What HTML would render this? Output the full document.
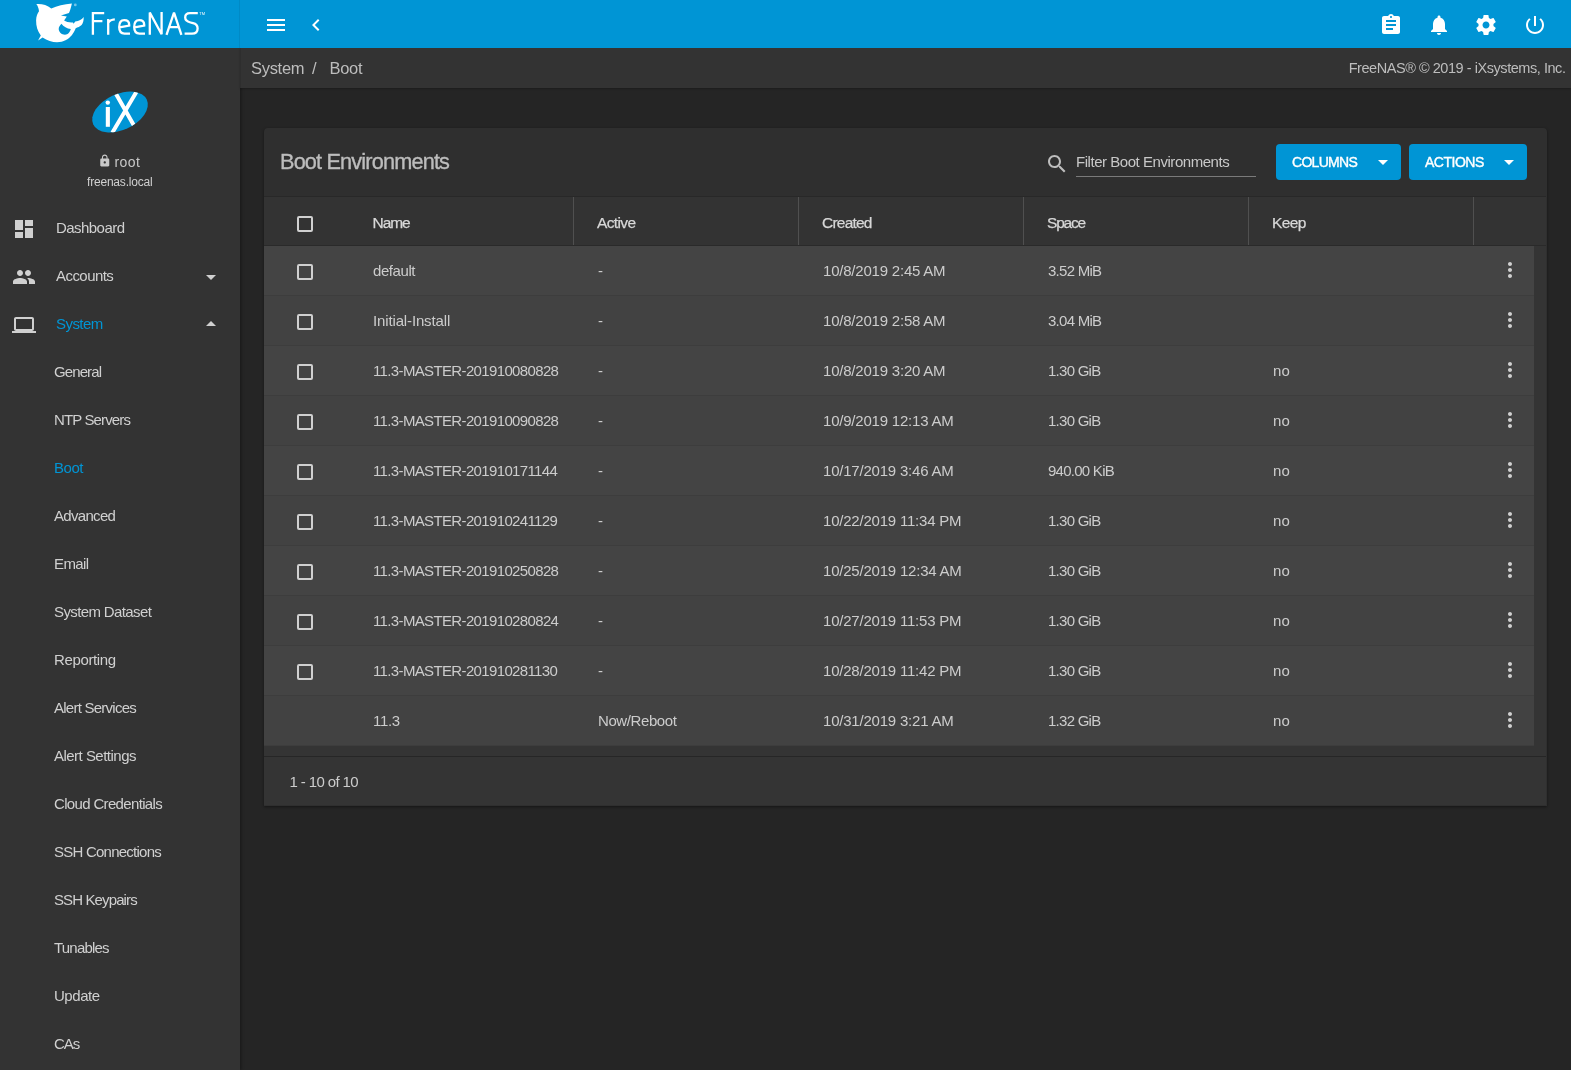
<!DOCTYPE html>
<html><head><meta charset="utf-8"><title>FreeNAS - Boot</title>
<style>
*{box-sizing:border-box;margin:0;padding:0}
html,body{width:1571px;height:1070px;overflow:hidden;background:#252525;font-family:"Liberation Sans",sans-serif;}
body{will-change:transform}
.t{position:absolute;white-space:nowrap}
svg.ic{position:absolute;width:24px;height:24px}
#top{position:absolute;left:0;top:0;width:1571px;height:48px;background:#0095d5}
#logodiv{position:absolute;left:239px;top:0;width:1px;height:48px;background:rgba(0,0,0,0.07)}
#side{position:absolute;left:0;top:48px;width:240px;height:1022px;background:#333333;box-shadow:1px 0 3px rgba(0,0,0,0.38)}
#crumbbar{position:absolute;left:240px;top:48px;width:1331px;height:40px;background:#333333;border-left:1px solid #2e2e2e;box-shadow:0 1px 2px rgba(0,0,0,0.25)}
#card{position:absolute;left:264px;top:128px;width:1283px;height:678px;background:#2f2f2f;border-radius:4px 4px 0 0;box-shadow:0 1px 3px rgba(0,0,0,0.45);overflow:hidden}
#tbl{position:absolute;left:0;top:68px;width:1282px;height:609px;background:#343434}
#uline{position:absolute;left:1076px;top:176px;width:180px;height:1px;background:#7a7a7a}
.btn{position:absolute;top:144px;height:36px;background:#0095d5;border-radius:4px}
#hdr{position:absolute;left:264px;top:196px;width:1282px;height:50px;background:#333333;border-top:1px solid #282828;border-bottom:1px solid #2a2a2a}
.vdiv{position:absolute;top:197px;width:1px;height:48px;background:#505050}
.cb{position:absolute;width:16px;height:16px;border:2px solid #d0d0d0;border-radius:2px}
.row{position:absolute;left:264px;width:1270px;height:50px;border-bottom:1px solid #3d3d3d}
.odd{background:#444444}
.even{background:#424242}
#fline{position:absolute;left:264px;top:756px;width:1282px;height:1px;background:#262626}

</style></head>
<body>
<div id="card"><div id="tbl"></div></div><div class="t" style="left:280px;top:151.13px;font-size:21.7px;line-height:21.7px;color:#bdbdbd;letter-spacing:-0.83px;-webkit-text-stroke:0.35px #bdbdbd;">Boot Environments</div><svg class="ic" style="left:1045px;top:152px;width:24px;height:24px" viewBox="0 0 24 24" fill="#bdbdbd"><path d="M15.5 14h-.79l-.28-.27C15.41 12.59 16 11.11 16 9.5 16 5.91 13.09 3 9.5 3S3 5.91 3 9.5 5.91 16 9.5 16c1.61 0 3.09-.59 4.23-1.57l.27.28v.79l5 4.99L20.49 19l-4.99-5zm-6 0C7.01 14 5 11.99 5 9.5S7.01 5 9.5 5 14 7.01 14 9.5 11.99 14 9.5 14z"/></svg><div class="t" style="left:1076px;top:154.30px;font-size:15px;line-height:15px;color:#c8c8c8;letter-spacing:-0.46px;">Filter Boot Environments</div><div id="uline"></div><div class="btn" style="left:1276px;width:125px"></div><div class="t" style="left:1292px;top:155.05px;font-size:14px;line-height:14px;color:#fff;letter-spacing:-0.7px;-webkit-text-stroke:0.4px #fff;">COLUMNS</div><svg class="ic" style="left:1371px;top:150px;width:24px;height:24px" viewBox="0 0 24 24" fill="#fff"><path d="M7 10l5 5 5-5z"/></svg><div class="btn" style="left:1409px;width:118px"></div><div class="t" style="left:1425px;top:155.05px;font-size:14px;line-height:14px;color:#fff;letter-spacing:-0.5px;-webkit-text-stroke:0.4px #fff;">ACTIONS</div><svg class="ic" style="left:1497px;top:150px;width:24px;height:24px" viewBox="0 0 24 24" fill="#fff"><path d="M7 10l5 5 5-5z"/></svg><div id="hdr"></div><div class="cb" style="left:297px;top:216px"></div><div class="t" style="left:372.5px;top:215.08px;font-size:15.5px;line-height:15.5px;color:#d8d8d8;letter-spacing:-1.05px;-webkit-text-stroke:0.25px #d8d8d8;">Name</div><div class="t" style="left:597px;top:215.08px;font-size:15.5px;line-height:15.5px;color:#d8d8d8;letter-spacing:-0.63px;-webkit-text-stroke:0.25px #d8d8d8;">Active</div><div class="t" style="left:822px;top:215.08px;font-size:15.5px;line-height:15.5px;color:#d8d8d8;letter-spacing:-0.78px;-webkit-text-stroke:0.25px #d8d8d8;">Created</div><div class="t" style="left:1047px;top:215.08px;font-size:15.5px;line-height:15.5px;color:#d8d8d8;letter-spacing:-1.2px;-webkit-text-stroke:0.25px #d8d8d8;">Space</div><div class="t" style="left:1272px;top:215.08px;font-size:15.5px;line-height:15.5px;color:#d8d8d8;letter-spacing:-0.58px;-webkit-text-stroke:0.25px #d8d8d8;">Keep</div><div class="vdiv" style="left:573px"></div><div class="vdiv" style="left:798px"></div><div class="vdiv" style="left:1023px"></div><div class="vdiv" style="left:1248px"></div><div class="vdiv" style="left:1473px"></div><div class="row odd" style="top:246px"></div><div class="cb" style="left:297px;top:264px"></div><div class="t" style="left:373px;top:263.30px;font-size:15px;line-height:15px;color:#cccccc;letter-spacing:-0.42px;">default</div><div class="t" style="left:598px;top:263.30px;font-size:15px;line-height:15px;color:#cccccc;letter-spacing:-0.41px;">-</div><div class="t" style="left:823px;top:263.30px;font-size:15px;line-height:15px;color:#cccccc;letter-spacing:-0.21px;">10/8/2019 2:45 AM</div><div class="t" style="left:1048px;top:263.30px;font-size:15px;line-height:15px;color:#cccccc;letter-spacing:-0.74px;">3.52 MiB</div><svg class="ic" style="left:1498px;top:258px;width:24px;height:24px" viewBox="0 0 24 24" fill="#d0d0d0"><path d="M12 8c1.1 0 2-.9 2-2s-.9-2-2-2-2 .9-2 2 .9 2 2 2zm0 2c-1.1 0-2 .9-2 2s.9 2 2 2 2-.9 2-2-.9-2-2-2zm0 6c-1.1 0-2 .9-2 2s.9 2 2 2 2-.9 2-2-.9-2-2-2z"/></svg><div class="row even" style="top:296px"></div><div class="cb" style="left:297px;top:314px"></div><div class="t" style="left:373px;top:313.30px;font-size:15px;line-height:15px;color:#cccccc;letter-spacing:-0.14px;">Initial-Install</div><div class="t" style="left:598px;top:313.30px;font-size:15px;line-height:15px;color:#cccccc;letter-spacing:-0.41px;">-</div><div class="t" style="left:823px;top:313.30px;font-size:15px;line-height:15px;color:#cccccc;letter-spacing:-0.21px;">10/8/2019 2:58 AM</div><div class="t" style="left:1048px;top:313.30px;font-size:15px;line-height:15px;color:#cccccc;letter-spacing:-0.74px;">3.04 MiB</div><svg class="ic" style="left:1498px;top:308px;width:24px;height:24px" viewBox="0 0 24 24" fill="#d0d0d0"><path d="M12 8c1.1 0 2-.9 2-2s-.9-2-2-2-2 .9-2 2 .9 2 2 2zm0 2c-1.1 0-2 .9-2 2s.9 2 2 2 2-.9 2-2-.9-2-2-2zm0 6c-1.1 0-2 .9-2 2s.9 2 2 2 2-.9 2-2-.9-2-2-2z"/></svg><div class="row odd" style="top:346px"></div><div class="cb" style="left:297px;top:364px"></div><div class="t" style="left:373px;top:363.30px;font-size:15px;line-height:15px;color:#cccccc;letter-spacing:-0.64px;">11.3-MASTER-201910080828</div><div class="t" style="left:598px;top:363.30px;font-size:15px;line-height:15px;color:#cccccc;letter-spacing:-0.41px;">-</div><div class="t" style="left:823px;top:363.30px;font-size:15px;line-height:15px;color:#cccccc;letter-spacing:-0.21px;">10/8/2019 3:20 AM</div><div class="t" style="left:1048px;top:363.30px;font-size:15px;line-height:15px;color:#cccccc;letter-spacing:-0.74px;">1.30 GiB</div><div class="t" style="left:1273px;top:363.30px;font-size:15px;line-height:15px;color:#cccccc;letter-spacing:0.1px;">no</div><svg class="ic" style="left:1498px;top:358px;width:24px;height:24px" viewBox="0 0 24 24" fill="#d0d0d0"><path d="M12 8c1.1 0 2-.9 2-2s-.9-2-2-2-2 .9-2 2 .9 2 2 2zm0 2c-1.1 0-2 .9-2 2s.9 2 2 2 2-.9 2-2-.9-2-2-2zm0 6c-1.1 0-2 .9-2 2s.9 2 2 2 2-.9 2-2-.9-2-2-2z"/></svg><div class="row even" style="top:396px"></div><div class="cb" style="left:297px;top:414px"></div><div class="t" style="left:373px;top:413.30px;font-size:15px;line-height:15px;color:#cccccc;letter-spacing:-0.64px;">11.3-MASTER-201910090828</div><div class="t" style="left:598px;top:413.30px;font-size:15px;line-height:15px;color:#cccccc;letter-spacing:-0.41px;">-</div><div class="t" style="left:823px;top:413.30px;font-size:15px;line-height:15px;color:#cccccc;letter-spacing:-0.21px;">10/9/2019 12:13 AM</div><div class="t" style="left:1048px;top:413.30px;font-size:15px;line-height:15px;color:#cccccc;letter-spacing:-0.74px;">1.30 GiB</div><div class="t" style="left:1273px;top:413.30px;font-size:15px;line-height:15px;color:#cccccc;letter-spacing:0.1px;">no</div><svg class="ic" style="left:1498px;top:408px;width:24px;height:24px" viewBox="0 0 24 24" fill="#d0d0d0"><path d="M12 8c1.1 0 2-.9 2-2s-.9-2-2-2-2 .9-2 2 .9 2 2 2zm0 2c-1.1 0-2 .9-2 2s.9 2 2 2 2-.9 2-2-.9-2-2-2zm0 6c-1.1 0-2 .9-2 2s.9 2 2 2 2-.9 2-2-.9-2-2-2z"/></svg><div class="row odd" style="top:446px"></div><div class="cb" style="left:297px;top:464px"></div><div class="t" style="left:373px;top:463.30px;font-size:15px;line-height:15px;color:#cccccc;letter-spacing:-0.64px;">11.3-MASTER-201910171144</div><div class="t" style="left:598px;top:463.30px;font-size:15px;line-height:15px;color:#cccccc;letter-spacing:-0.41px;">-</div><div class="t" style="left:823px;top:463.30px;font-size:15px;line-height:15px;color:#cccccc;letter-spacing:-0.21px;">10/17/2019 3:46 AM</div><div class="t" style="left:1048px;top:463.30px;font-size:15px;line-height:15px;color:#cccccc;letter-spacing:-0.74px;">940.00 KiB</div><div class="t" style="left:1273px;top:463.30px;font-size:15px;line-height:15px;color:#cccccc;letter-spacing:0.1px;">no</div><svg class="ic" style="left:1498px;top:458px;width:24px;height:24px" viewBox="0 0 24 24" fill="#d0d0d0"><path d="M12 8c1.1 0 2-.9 2-2s-.9-2-2-2-2 .9-2 2 .9 2 2 2zm0 2c-1.1 0-2 .9-2 2s.9 2 2 2 2-.9 2-2-.9-2-2-2zm0 6c-1.1 0-2 .9-2 2s.9 2 2 2 2-.9 2-2-.9-2-2-2z"/></svg><div class="row even" style="top:496px"></div><div class="cb" style="left:297px;top:514px"></div><div class="t" style="left:373px;top:513.30px;font-size:15px;line-height:15px;color:#cccccc;letter-spacing:-0.64px;">11.3-MASTER-201910241129</div><div class="t" style="left:598px;top:513.30px;font-size:15px;line-height:15px;color:#cccccc;letter-spacing:-0.41px;">-</div><div class="t" style="left:823px;top:513.30px;font-size:15px;line-height:15px;color:#cccccc;letter-spacing:-0.21px;">10/22/2019 11:34 PM</div><div class="t" style="left:1048px;top:513.30px;font-size:15px;line-height:15px;color:#cccccc;letter-spacing:-0.74px;">1.30 GiB</div><div class="t" style="left:1273px;top:513.30px;font-size:15px;line-height:15px;color:#cccccc;letter-spacing:0.1px;">no</div><svg class="ic" style="left:1498px;top:508px;width:24px;height:24px" viewBox="0 0 24 24" fill="#d0d0d0"><path d="M12 8c1.1 0 2-.9 2-2s-.9-2-2-2-2 .9-2 2 .9 2 2 2zm0 2c-1.1 0-2 .9-2 2s.9 2 2 2 2-.9 2-2-.9-2-2-2zm0 6c-1.1 0-2 .9-2 2s.9 2 2 2 2-.9 2-2-.9-2-2-2z"/></svg><div class="row odd" style="top:546px"></div><div class="cb" style="left:297px;top:564px"></div><div class="t" style="left:373px;top:563.30px;font-size:15px;line-height:15px;color:#cccccc;letter-spacing:-0.64px;">11.3-MASTER-201910250828</div><div class="t" style="left:598px;top:563.30px;font-size:15px;line-height:15px;color:#cccccc;letter-spacing:-0.41px;">-</div><div class="t" style="left:823px;top:563.30px;font-size:15px;line-height:15px;color:#cccccc;letter-spacing:-0.21px;">10/25/2019 12:34 AM</div><div class="t" style="left:1048px;top:563.30px;font-size:15px;line-height:15px;color:#cccccc;letter-spacing:-0.74px;">1.30 GiB</div><div class="t" style="left:1273px;top:563.30px;font-size:15px;line-height:15px;color:#cccccc;letter-spacing:0.1px;">no</div><svg class="ic" style="left:1498px;top:558px;width:24px;height:24px" viewBox="0 0 24 24" fill="#d0d0d0"><path d="M12 8c1.1 0 2-.9 2-2s-.9-2-2-2-2 .9-2 2 .9 2 2 2zm0 2c-1.1 0-2 .9-2 2s.9 2 2 2 2-.9 2-2-.9-2-2-2zm0 6c-1.1 0-2 .9-2 2s.9 2 2 2 2-.9 2-2-.9-2-2-2z"/></svg><div class="row even" style="top:596px"></div><div class="cb" style="left:297px;top:614px"></div><div class="t" style="left:373px;top:613.30px;font-size:15px;line-height:15px;color:#cccccc;letter-spacing:-0.64px;">11.3-MASTER-201910280824</div><div class="t" style="left:598px;top:613.30px;font-size:15px;line-height:15px;color:#cccccc;letter-spacing:-0.41px;">-</div><div class="t" style="left:823px;top:613.30px;font-size:15px;line-height:15px;color:#cccccc;letter-spacing:-0.21px;">10/27/2019 11:53 PM</div><div class="t" style="left:1048px;top:613.30px;font-size:15px;line-height:15px;color:#cccccc;letter-spacing:-0.74px;">1.30 GiB</div><div class="t" style="left:1273px;top:613.30px;font-size:15px;line-height:15px;color:#cccccc;letter-spacing:0.1px;">no</div><svg class="ic" style="left:1498px;top:608px;width:24px;height:24px" viewBox="0 0 24 24" fill="#d0d0d0"><path d="M12 8c1.1 0 2-.9 2-2s-.9-2-2-2-2 .9-2 2 .9 2 2 2zm0 2c-1.1 0-2 .9-2 2s.9 2 2 2 2-.9 2-2-.9-2-2-2zm0 6c-1.1 0-2 .9-2 2s.9 2 2 2 2-.9 2-2-.9-2-2-2z"/></svg><div class="row odd" style="top:646px"></div><div class="cb" style="left:297px;top:664px"></div><div class="t" style="left:373px;top:663.30px;font-size:15px;line-height:15px;color:#cccccc;letter-spacing:-0.64px;">11.3-MASTER-201910281130</div><div class="t" style="left:598px;top:663.30px;font-size:15px;line-height:15px;color:#cccccc;letter-spacing:-0.41px;">-</div><div class="t" style="left:823px;top:663.30px;font-size:15px;line-height:15px;color:#cccccc;letter-spacing:-0.21px;">10/28/2019 11:42 PM</div><div class="t" style="left:1048px;top:663.30px;font-size:15px;line-height:15px;color:#cccccc;letter-spacing:-0.74px;">1.30 GiB</div><div class="t" style="left:1273px;top:663.30px;font-size:15px;line-height:15px;color:#cccccc;letter-spacing:0.1px;">no</div><svg class="ic" style="left:1498px;top:658px;width:24px;height:24px" viewBox="0 0 24 24" fill="#d0d0d0"><path d="M12 8c1.1 0 2-.9 2-2s-.9-2-2-2-2 .9-2 2 .9 2 2 2zm0 2c-1.1 0-2 .9-2 2s.9 2 2 2 2-.9 2-2-.9-2-2-2zm0 6c-1.1 0-2 .9-2 2s.9 2 2 2 2-.9 2-2-.9-2-2-2z"/></svg><div class="row even" style="top:696px"></div><div class="t" style="left:373px;top:713.30px;font-size:15px;line-height:15px;color:#cccccc;letter-spacing:-0.3px;">11.3</div><div class="t" style="left:598px;top:713.30px;font-size:15px;line-height:15px;color:#cccccc;letter-spacing:-0.41px;">Now/Reboot</div><div class="t" style="left:823px;top:713.30px;font-size:15px;line-height:15px;color:#cccccc;letter-spacing:-0.21px;">10/31/2019 3:21 AM</div><div class="t" style="left:1048px;top:713.30px;font-size:15px;line-height:15px;color:#cccccc;letter-spacing:-0.74px;">1.32 GiB</div><div class="t" style="left:1273px;top:713.30px;font-size:15px;line-height:15px;color:#cccccc;letter-spacing:0.1px;">no</div><svg class="ic" style="left:1498px;top:708px;width:24px;height:24px" viewBox="0 0 24 24" fill="#d0d0d0"><path d="M12 8c1.1 0 2-.9 2-2s-.9-2-2-2-2 .9-2 2 .9 2 2 2zm0 2c-1.1 0-2 .9-2 2s.9 2 2 2 2-.9 2-2-.9-2-2-2zm0 6c-1.1 0-2 .9-2 2s.9 2 2 2 2-.9 2-2-.9-2-2-2z"/></svg><div id="fline"></div><div class="t" style="left:289.5px;top:774.30px;font-size:15px;line-height:15px;color:#cccccc;letter-spacing:-0.62px;">1 - 10 of 10</div><div id="side"></div><svg style="position:absolute;left:0;top:0" width="240" height="200" viewBox="0 0 240 200">
<defs><clipPath id="ixc"><ellipse cx="120" cy="112" rx="29.5" ry="18" transform="rotate(-25 120 112)"/></clipPath></defs>
<ellipse cx="120" cy="112" rx="29.5" ry="18" transform="rotate(-25 120 112)" fill="#0095d5"/>
<g clip-path="url(#ixc)" stroke="#fff" stroke-width="4">
<path d="M115.5 92.9 L133.8 125.2 M136.5 91.8 L112.3 132.7"/>
</g>
<rect x="105.8" y="107" width="4.1" height="19.8" fill="#fff"/>
<circle cx="107.8" cy="102.6" r="2.2" fill="#fff"/>
</svg>
<svg class="ic" style="left:97.6px;top:153.6px;width:13.5px;height:13.5px" viewBox="0 0 24 24" fill="#c8c8c8"><path d="M18 8h-1V6c0-2.76-2.24-5-5-5S7 3.24 7 6v2H6c-1.1 0-2 .9-2 2v10c0 1.1.9 2 2 2h12c1.1 0 2-.9 2-2V10c0-1.1-.9-2-2-2zm-6 9c-1.1 0-2-.9-2-2s.9-2 2-2 2 .9 2 2-.9 2-2 2zm3.1-9H8.9V6c0-1.71 1.39-3.1 3.1-3.1 1.71 0 3.1 1.39 3.1 3.1v2z"/></svg><div class="t" style="left:114.5px;top:155.15px;font-size:14px;line-height:14px;color:#c8c8c8;letter-spacing:0.4px;">root</div><div class="t" style="left:87px;top:175.84px;font-size:12px;line-height:12px;color:#d0d0d0;letter-spacing:-0.2px;">freenas.local</div><svg class="ic" style="left:12px;top:217px;width:24px;height:24px" viewBox="0 0 24 24" fill="#d0d0d0"><path d="M3 13h8V3H3v10zm0 8h8v-6H3v6zm10 0h8V11h-8v10zm0-18v6h8V3h-8z"/></svg><div class="t" style="left:56px;top:220.30px;font-size:15px;line-height:15px;color:#d0d0d0;letter-spacing:-0.55px;">Dashboard</div><svg class="ic" style="left:12px;top:265px;width:24px;height:24px" viewBox="0 0 24 24" fill="#d0d0d0"><path d="M16 11c1.66 0 2.99-1.34 2.99-3S17.66 5 16 5c-1.66 0-3 1.34-3 3s1.34 3 3 3zm-8 0c1.66 0 2.99-1.34 2.99-3S9.66 5 8 5C6.34 5 5 6.34 5 8s1.34 3 3 3zm0 2c-2.33 0-7 1.17-7 3.5V19h14v-2.5c0-2.33-4.67-3.5-7-3.5zm8 0c-.29 0-.62.02-.97.05 1.16.84 1.97 1.97 1.97 3.45V19h6v-2.5c0-2.33-4.67-3.5-7-3.5z"/></svg><div class="t" style="left:56px;top:268.30px;font-size:15px;line-height:15px;color:#d0d0d0;letter-spacing:-0.55px;">Accounts</div><svg class="ic" style="left:12px;top:313px;width:24px;height:24px" viewBox="0 0 24 24" fill="#d0d0d0"><path d="M20 18c1.1 0 1.99-.9 1.99-2L22 6c0-1.1-.9-2-2-2H4c-1.1 0-2 .9-2 2v10c0 1.1.9 2 2 2H0v2h24v-2h-4zM4 6h16v10H4V6z"/></svg><div class="t" style="left:56px;top:316.30px;font-size:15px;line-height:15px;color:#0095d5;letter-spacing:-0.55px;">System</div><svg class="ic" style="left:199px;top:265px;width:24px;height:24px" viewBox="0 0 24 24" fill="#d0d0d0"><path d="M7 10l5 5 5-5z"/></svg><svg class="ic" style="left:199px;top:312px;width:24px;height:24px" viewBox="0 0 24 24" fill="#d0d0d0"><path d="M7 14l5-5 5 5z"/></svg><div class="t" style="left:54px;top:364.30px;font-size:15px;line-height:15px;color:#d0d0d0;letter-spacing:-0.9px;">General</div><div class="t" style="left:54px;top:412.30px;font-size:15px;line-height:15px;color:#d0d0d0;letter-spacing:-0.86px;">NTP Servers</div><div class="t" style="left:54px;top:460.30px;font-size:15px;line-height:15px;color:#0095d5;letter-spacing:-0.47px;">Boot</div><div class="t" style="left:54px;top:508.30px;font-size:15px;line-height:15px;color:#d0d0d0;letter-spacing:-0.69px;">Advanced</div><div class="t" style="left:54px;top:556.30px;font-size:15px;line-height:15px;color:#d0d0d0;letter-spacing:-0.58px;">Email</div><div class="t" style="left:54px;top:604.30px;font-size:15px;line-height:15px;color:#d0d0d0;letter-spacing:-0.62px;">System Dataset</div><div class="t" style="left:54px;top:652.30px;font-size:15px;line-height:15px;color:#d0d0d0;letter-spacing:-0.36px;">Reporting</div><div class="t" style="left:54px;top:700.30px;font-size:15px;line-height:15px;color:#d0d0d0;letter-spacing:-0.75px;">Alert Services</div><div class="t" style="left:54px;top:748.30px;font-size:15px;line-height:15px;color:#d0d0d0;letter-spacing:-0.52px;">Alert Settings</div><div class="t" style="left:54px;top:796.30px;font-size:15px;line-height:15px;color:#d0d0d0;letter-spacing:-0.66px;">Cloud Credentials</div><div class="t" style="left:54px;top:844.30px;font-size:15px;line-height:15px;color:#d0d0d0;letter-spacing:-0.76px;">SSH Connections</div><div class="t" style="left:54px;top:892.30px;font-size:15px;line-height:15px;color:#d0d0d0;letter-spacing:-0.88px;">SSH Keypairs</div><div class="t" style="left:54px;top:940.30px;font-size:15px;line-height:15px;color:#d0d0d0;letter-spacing:-0.8px;">Tunables</div><div class="t" style="left:54px;top:988.30px;font-size:15px;line-height:15px;color:#d0d0d0;letter-spacing:-0.46px;">Update</div><div class="t" style="left:54px;top:1036.30px;font-size:15px;line-height:15px;color:#d0d0d0;letter-spacing:-1.0px;">CAs</div><div id="crumbbar"></div><div class="t" style="left:251px;top:60.03px;font-size:16.5px;line-height:16.5px;color:#bdbdbd;letter-spacing:-0.3px;">System</div><div class="t" style="left:312px;top:60.03px;font-size:16.5px;line-height:16.5px;color:#bdbdbd;">/</div><div class="t" style="left:329.5px;top:60.03px;font-size:16.5px;line-height:16.5px;color:#bdbdbd;letter-spacing:-0.3px;">Boot</div><div class="t" style="right:5.5px;top:60.73px;font-size:14.5px;line-height:14.5px;color:#bdbdbd;letter-spacing:-0.45px">FreeNAS® © 2019 - iXsystems, Inc.</div><div id="top"><div id="logodiv"></div></div><svg style="position:absolute;left:0;top:0" width="240" height="48" viewBox="0 0 240 48">
<path fill="#fff" fill-rule="evenodd" d="M36.3 4 C42 3.6 47 5 51.3 8.5 C57 6 64 4 71.9 3.4 C71 7 70.2 10.5 69 13 L60.9 15.5 L66.8 16.6 L64.1 20.6 C66 22.2 70 22.6 73 22.4 L73.5 23.8 L75.3 21.5 C79 21 82 19.5 83.6 17 C84 20 83 23.5 81.6 25.1 C80 26.8 77.5 27.5 75.7 28.3 C73.5 33.5 71 37.5 65.5 40.3 C60 43.3 50 43 42.6 37.5 L38.1 40.6 L40.8 35.4 C37.5 31 36 26 36.1 20.2 C36.2 16 37.5 13.5 39 11.2 C38.8 8 37.5 5.5 36.3 4 Z M61.4 23.8 C60 25.5 58.7 27 58.7 29.1 C58.7 32 61.5 34.8 65 34.8 C68 34.8 70.2 32 70.8 29.1 C67 28.6 63.5 26.5 61.4 23.8 Z"/>
<circle cx="75.3" cy="4.9" r="1.4" fill="#fff" opacity="0.45"/>
<g fill="none" stroke="#fff" stroke-width="2.3" stroke-linejoin="miter">
<path d="M92.9 34.8 L92.9 13.2 L104.2 13.2 M92.9 21.2 L102.4 21.2"/>
<path d="M108.2 34.8 L108.2 19 M108.2 23 C109.5 20.5 111.5 19.6 114.8 19.4"/>
<path d="M130 33.6 L124.5 33.6 C120.8 33.6 119.2 31 119.2 27 C119.2 22.5 121 20.2 124.2 20.2 C127.5 20.2 129.2 22 129.2 24.8 L129.2 25.6 L119.5 27.4"/>
<path d="M145 33.6 L139.5 33.6 C135.8 33.6 134.2 31 134.2 27 C134.2 22.5 136 20.2 139.2 20.2 C142.5 20.2 144.2 22 144.2 24.8 L144.2 25.6 L134.5 27.4"/>
<path d="M149.8 34.8 L149.8 12.5 L161.6 34.3 L161.6 12"/>
<path stroke-linejoin="bevel" d="M166.5 34.8 L174 12.6 L181.4 34.8 M169 27.1 L179 27.1"/>
<path d="M197.8 13.2 L190 13.2 C186.5 13.2 185.2 15.5 185.2 17.6 C185.2 20.5 187.5 21.8 190.5 22.5 L193 23.1 C196.5 23.9 197.6 25.8 197.6 28.4 C197.6 31.8 195.5 33.6 192 33.6 L184.6 33.6"/>
</g>
<text x="199.2" y="15" font-size="4" fill="#fff" font-family="Liberation Sans">TM</text>
</svg>
<svg class="ic" style="left:264px;top:13px;width:24px;height:24px" viewBox="0 0 24 24" fill="#fff"><path d="M3 18h18v-2H3v2zm0-5h18v-2H3v2zm0-7v2h18V6H3z"/></svg><svg class="ic" style="left:304px;top:13px;width:24px;height:24px" viewBox="0 0 24 24" fill="#fff"><path d="M15.41 7.41L14 6l-6 6 6 6 1.41-1.41L10.83 12z"/></svg><svg class="ic" style="left:1379px;top:13px;width:24px;height:24px" viewBox="0 0 24 24" fill="#fff"><path d="M19 3h-4.18C14.4 1.84 13.3 1 12 1c-1.3 0-2.4.84-2.82 2H5c-1.1 0-2 .9-2 2v14c0 1.1.9 2 2 2h14c1.1 0 2-.9 2-2V5c0-1.1-.9-2-2-2zm-7 0c.55 0 1 .45 1 1s-.45 1-1 1-1-.45-1-1 .45-1 1-1zm2 14H7v-2h7v2zm3-4H7v-2h10v2zm0-4H7V7h10v2z"/></svg><svg class="ic" style="left:1427px;top:13px;width:24px;height:24px" viewBox="0 0 24 24" fill="#fff"><path d="M12 22c1.1 0 2-.9 2-2h-4c0 1.1.89 2 2 2zm6-6v-5c0-3.07-1.64-5.64-4.5-6.32V4c0-.83-.67-1.5-1.5-1.5s-1.5.67-1.5 1.5v.68C7.63 5.36 6 7.92 6 11v5l-2 2v1h16v-1l-2-2z"/></svg><svg class="ic" style="left:1474.2px;top:13px;width:24px;height:24px" viewBox="0 0 24 24" fill="#fff"><path d="M19.43 12.98c.04-.32.07-.64.07-.98s-.03-.66-.07-.98l2.11-1.65c.19-.15.24-.42.12-.64l-2-3.46c-.12-.22-.39-.3-.61-.22l-2.49 1c-.52-.4-1.08-.73-1.69-.98l-.38-2.65C14.46 2.18 14.25 2 14 2h-4c-.25 0-.46.18-.49.42l-.38 2.65c-.61.25-1.17.59-1.69.98l-2.49-1c-.23-.09-.49 0-.61.22l-2 3.46c-.13.22-.07.49.12.64l2.11 1.65c-.04.32-.07.65-.07.98s.03.66.07.98l-2.11 1.65c-.19.15-.24.42-.12.64l2 3.46c.12.22.39.3.61.22l2.49-1c.52.4 1.08.73 1.69.98l.38 2.65c.03.24.24.42.49.42h4c.25 0 .46-.18.49-.42l.38-2.65c.61-.25 1.17-.59 1.69-.98l2.49 1c.23.09.49 0 .61-.22l2-3.46c.12-.22.07-.49-.12-.64l-2.11-1.65zM12 15.5c-1.93 0-3.5-1.570-3.5-3.5s1.57-3.5 3.5-3.5 3.5 1.57 3.5 3.5-1.57 3.5-3.5 3.5z"/></svg><svg class="ic" style="left:1523px;top:13px;width:24px;height:24px" viewBox="0 0 24 24" fill="#fff"><path d="M13 3h-2v10h2V3zm4.83 2.17l-1.42 1.42C17.99 7.86 19 9.81 19 12c0 3.87-3.13 7-7 7s-7-3.13-7-7c0-2.19 1.01-4.14 2.58-5.42L6.17 5.17C4.23 6.82 3 9.26 3 12c0 4.97 4.03 9 9 9s9-4.03 9-9c0-2.74-1.23-5.18-3.17-6.83z"/></svg>
</body></html>
